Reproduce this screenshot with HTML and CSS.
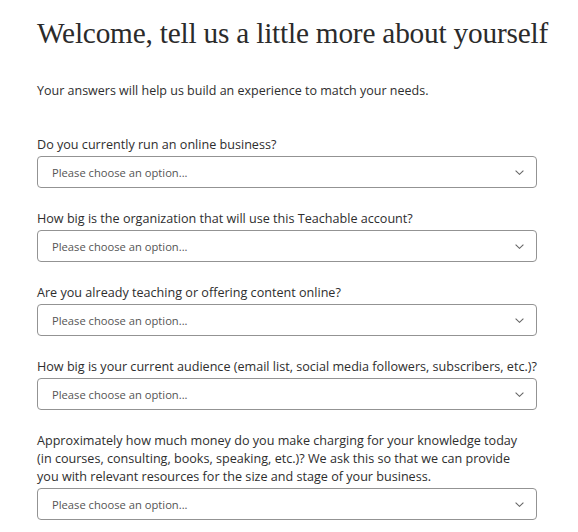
FILE: index.html
```html
<!DOCTYPE html>
<html lang="en">
<head>
<meta charset="utf-8">
<title>Welcome</title>
<link rel="stylesheet" href="styles.css">
</head>
<body>
<main class="page">
  <h1 class="title">Welcome, tell us a little more about yourself</h1>
  <p class="intro">Your answers will help us build an experience to match your needs.</p>
  <form class="form">
    <div class="field">
      <label class="label">Do you currently run an online business?</label>
      <div class="select"><span class="placeholder">Please choose an option...</span><svg class="chev" width="9" height="5" viewBox="0 0 9 5"><path d="M0.6 0.6l3.9 3.7 3.9-3.7" fill="none" stroke="#666" stroke-width="1.1"/></svg></div>
    </div>
    <div class="field">
      <label class="label">How big is the organization that will use this Teachable account?</label>
      <div class="select"><span class="placeholder">Please choose an option...</span><svg class="chev" width="9" height="5" viewBox="0 0 9 5"><path d="M0.6 0.6l3.9 3.7 3.9-3.7" fill="none" stroke="#666" stroke-width="1.1"/></svg></div>
    </div>
    <div class="field">
      <label class="label">Are you already teaching or offering content online?</label>
      <div class="select"><span class="placeholder">Please choose an option...</span><svg class="chev" width="9" height="5" viewBox="0 0 9 5"><path d="M0.6 0.6l3.9 3.7 3.9-3.7" fill="none" stroke="#666" stroke-width="1.1"/></svg></div>
    </div>
    <div class="field">
      <label class="label">How big is your current audience (email list, social media followers, subscribers, etc.)?</label>
      <div class="select"><span class="placeholder">Please choose an option...</span><svg class="chev" width="9" height="5" viewBox="0 0 9 5"><path d="M0.6 0.6l3.9 3.7 3.9-3.7" fill="none" stroke="#666" stroke-width="1.1"/></svg></div>
    </div>
    <div class="field">
      <label class="label label-long">Approximately how much money do you make charging for your knowledge today (in courses, consulting, books, speaking, etc.)? We ask this so that we can provide you with relevant resources for the size and stage of your business.</label>
      <div class="select"><span class="placeholder">Please choose an option...</span><svg class="chev" width="9" height="5" viewBox="0 0 9 5"><path d="M0.6 0.6l3.9 3.7 3.9-3.7" fill="none" stroke="#666" stroke-width="1.1"/></svg></div>
    </div>
  </form>
</main>
</body>
</html>
```

FILE: styles.css
```css
html, body {
  margin: 0;
  padding: 0;
  background: #ffffff;
}
.page {
  padding: 16px 0 0 37px;
  width: 500px;
  font-family: "Open Sans", "Liberation Sans", sans-serif;
  color: #2e2e2e;
}
.title {
  margin: 0;
  font-family: "Liberation Serif", serif;
  font-weight: 400;
  font-size: 29.3px;
  line-height: 34px;
  color: #2b2b2b;
  white-space: nowrap;
  letter-spacing: -0.2px;
}
.intro {
  margin: 32px 0 0 0;
  font-size: 12.5px;
  line-height: 18px;
}
.form {
  margin-top: 36px;
  display: flex;
  flex-direction: column;
  gap: 22px;
}
.field {
  display: flex;
  flex-direction: column;
  gap: 2px;
}
.label {
  font-size: 12.6px;
  line-height: 18px;
}
.label-long {
  max-width: 488px;
}
.select {
  box-sizing: border-box;
  height: 32px;
  border: 1px solid #939393;
  border-radius: 4px;
  display: flex;
  align-items: center;
  justify-content: space-between;
  padding: 0 12px 0 14px;
}
.placeholder {
  font-size: 11.2px;
  color: #555;
}
.chev {
  display: block;
}
```
